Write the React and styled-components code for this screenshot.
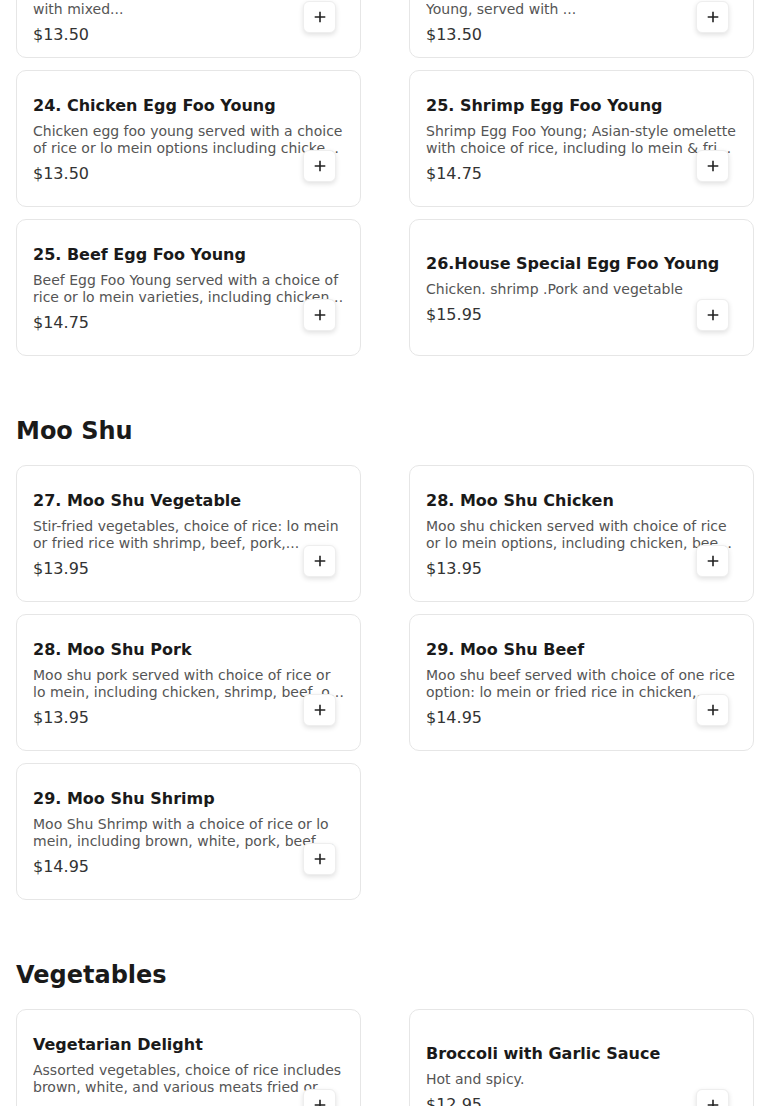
import React from "react";
import styled, { createGlobalStyle } from "styled-components";

const Global = createGlobalStyle`
  html, body { margin: 0; padding: 0; background: #fff; }
  body { font-family: "DejaVu Sans", "Liberation Sans", sans-serif; color: #1a1a1a; }
  * { box-sizing: border-box; }
`;

const Page = styled.main`
  padding: 0 16px;
  margin-top: -79px;
`;

const Section = styled.section`
  & + & { margin-top: 61px; }
`;

const Heading = styled.h2`
  margin: 0 0 20px;
  font-size: 24px;
  line-height: 28px;
  font-weight: 700;
  color: #1a1a1a;
`;

const Grid = styled.div`
  display: grid;
  grid-template-columns: 1fr 1fr;
  column-gap: 48px;
  row-gap: 12px;
`;

const Card = styled.div`
  position: relative;
  display: flex;
  flex-direction: column;
  justify-content: center;
  height: 137px;
  padding: 25px 16px 20px;
  border: 1px solid #e6e6e6;
  border-radius: 10px;
  background: #fff;
`;

const Title = styled.h3`
  flex-shrink: 0;
  margin: 0 0 7px;
  font-size: 16px;
  line-height: 20px;
  font-weight: 700;
  color: #1a1a1a;
`;

const Desc = styled.p`
  flex-shrink: 0;
  margin: 0;
  font-size: 14px;
  line-height: 17px;
  color: #555;
  display: -webkit-box;
  -webkit-line-clamp: 2;
  -webkit-box-orient: vertical;
  overflow: hidden;
`;

const Price = styled.div`
  flex-shrink: 0;
  margin-top: 5px;
  font-size: 16px;
  line-height: 24px;
  color: #333;
`;

const AddButton = styled.button`
  position: absolute;
  right: 24px;
  bottom: 24px;
  width: 33px;
  height: 32px;
  padding: 0;
  display: flex;
  align-items: center;
  justify-content: center;
  background: #fff;
  border: 1px solid #eee;
  border-radius: 6px;
  box-shadow: 0 2px 5px rgba(0, 0, 0, 0.12);
  color: #222;
  cursor: pointer;
`;

const PlusIcon = () => (
  <svg width="12" height="12" viewBox="0 0 12 12" aria-hidden="true">
    <path d="M6 1.5v9M1.5 6h9" stroke="currentColor" strokeWidth="1.6" strokeLinecap="square" />
  </svg>
);

const sections = [
  {
    title: null,
    items: [
      { name: "22. Vegetable Egg Foo Young with Mixed Vegetables", desc: "Vegetable egg foo young, choice of rice, with mixed...", price: "$13.50" },
      { name: "23. Roast Pork Egg Foo Young with Onions and Sprouts", desc: "Pork egg foo young, rice; Pork Egg Foo Young, served with ...", price: "$13.50" },
      { name: "24. Chicken Egg Foo Young", desc: "Chicken egg foo young served with a choice of rice or lo mein options including chicken, shrimp, beef, or pork.", price: "$13.50" },
      { name: "25. Shrimp Egg Foo Young", desc: "Shrimp Egg Foo Young; Asian-style omelette with choice of rice, including lo mein & fried rice options.", price: "$14.75" },
      { name: "25. Beef Egg Foo Young", desc: "Beef Egg Foo Young served with a choice of rice or lo mein varieties, including chicken, shrimp, pork.", price: "$14.75" },
      { name: "26.House Special Egg Foo Young", desc: "Chicken. shrimp .Pork and vegetable", price: "$15.95" },
    ],
  },
  {
    title: "Moo Shu",
    items: [
      { name: "27. Moo Shu Vegetable", desc: "Stir-fried vegetables, choice of rice: lo mein or fried rice with shrimp, beef, pork,...", price: "$13.95" },
      { name: "28. Moo Shu Chicken", desc: "Moo shu chicken served with choice of rice or lo mein options, including chicken, beef, shrimp, pork.", price: "$13.95" },
      { name: "28. Moo Shu Pork", desc: "Moo shu pork served with choice of rice or lo mein, including chicken, shrimp, beef, or vegetable.", price: "$13.95" },
      { name: "29. Moo Shu Beef", desc: "Moo shu beef served with choice of one rice option: lo mein or fried rice in chicken, shrimp, pork.", price: "$14.95" },
      { name: "29. Moo Shu Shrimp", desc: "Moo Shu Shrimp with a choice of rice or lo mein, including brown, white, pork, beef, chicken options.", price: "$14.95" },
    ],
  },
  {
    title: "Vegetables",
    items: [
      { name: "Vegetarian Delight", desc: "Assorted vegetables, choice of rice includes brown, white, and various meats fried or steamed.", price: "$12.95" },
      { name: "Broccoli with Garlic Sauce", desc: "Hot and spicy.", price: "$12.95" },
    ],
  },
];

export default function App() {
  return (
    <>
      <Global />
      <Page>
        {sections.map((s, i) => (
          <Section key={i}>
            {s.title && <Heading>{s.title}</Heading>}
            <Grid>
              {s.items.map((it) => (
                <Card key={it.name}>
                  <Title>{it.name}</Title>
                  <Desc>{it.desc}</Desc>
                  <Price>{it.price}</Price>
                  <AddButton aria-label={`Add ${it.name}`}>
                    <PlusIcon />
                  </AddButton>
                </Card>
              ))}
            </Grid>
          </Section>
        ))}
      </Page>
    </>
  );
}
